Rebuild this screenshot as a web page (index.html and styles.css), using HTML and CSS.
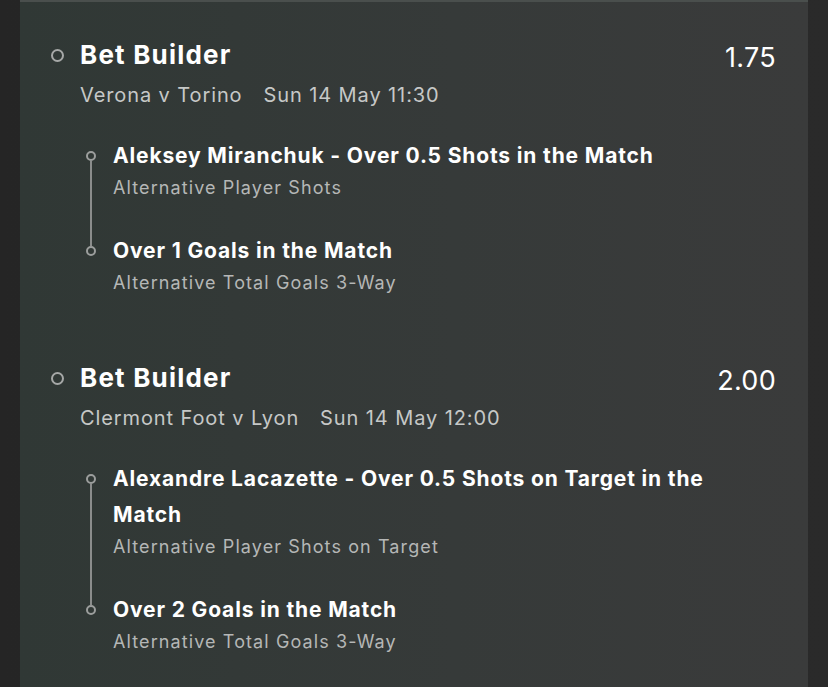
FILE: index.html
```html
<!DOCTYPE html>
<html lang="en">
<head>
  <meta charset="UTF-8" />
  <meta name="viewport" content="width=device-width, initial-scale=1.0"/>
  <title>Bet Slip</title>
  <link rel="stylesheet" href="styles.css">
</head>
<body>

  <div class="slip">

    <!-- Bet 1 -->
    <div class="bet">
      <div class="bet-head">
        <span class="ring"></span>
        <div class="title">Bet Builder</div>
        <div class="odds">1.75</div>
      </div>
      <div class="meta">
        <span>Verona v Torino</span>
        <span>Sun 14 May 11:30</span>
      </div>
      <div class="legs">
        <div class="leg">
          <div class="marker"><span class="dot"></span></div>
          <div class="leg-text">
            <div class="leg-title">Aleksey Miranchuk - Over 0.5 Shots in the Match</div>
            <div class="leg-sub">Alternative Player Shots</div>
          </div>
        </div>
        <div class="leg">
          <div class="marker"><span class="dot"></span></div>
          <div class="leg-text">
            <div class="leg-title">Over 1 Goals in the Match</div>
            <div class="leg-sub">Alternative Total Goals 3-Way</div>
          </div>
        </div>
      </div>
    </div>

    <!-- Bet 2 -->
    <div class="bet">
      <div class="bet-head">
        <span class="ring"></span>
        <div class="title">Bet Builder</div>
        <div class="odds">2.00</div>
      </div>
      <div class="meta">
        <span>Clermont Foot v Lyon</span>
        <span>Sun 14 May 12:00</span>
      </div>
      <div class="legs">
        <div class="leg">
          <div class="marker"><span class="dot"></span></div>
          <div class="leg-text">
            <div class="leg-title">Alexandre Lacazette - Over 0.5 Shots on Target in the Match</div>
            <div class="leg-sub">Alternative Player Shots on Target</div>
          </div>
        </div>
        <div class="leg">
          <div class="marker"><span class="dot"></span></div>
          <div class="leg-text">
            <div class="leg-title">Over 2 Goals in the Match</div>
            <div class="leg-sub">Alternative Total Goals 3-Way</div>
          </div>
        </div>
      </div>
    </div>

  </div>

</body>
</html>
```

FILE: styles.css
```css
* {
  box-sizing: border-box;
}

body {
  margin: 0;
  padding: 0;
  background: linear-gradient(to right, #252525, #2a2a2a);
  font-family: 'Inter', 'Noto Sans', sans-serif;
  color: #fff;
  height: 687px;
  overflow: hidden;
}

.slip {
  margin: 0 20px;
  min-height: 700px;
  background: linear-gradient(to right, #303835, #363a39 55%, #3a3b3b);
  border-top: 2px solid #4a4f4d;
  padding: 36px 32px 0 31px;
}

.bet {
  margin-bottom: 64px;
}

.bet-head {
  display: flex;
  align-items: center;
  height: 34px;
}

.ring {
  width: 13px;
  height: 13px;
  border: 2px solid #a6a8a7;
  border-radius: 50%;
  margin-right: 16px;
  flex-shrink: 0;
}

.title {
  font-size: 26px;
  font-weight: 700;
  line-height: 34px;
  letter-spacing: 1.2px;
  flex: 1;
}

.odds {
  font-size: 27px;
  font-weight: 400;
  line-height: 34px;
  letter-spacing: 0.3px;
  padding-top: 6px;
}

.meta {
  margin: 9px 0 0 29px;
  font-size: 20px;
  line-height: 28px;
  letter-spacing: 0.9px;
  color: #c6c8c7;
  display: flex;
  gap: 21px;
}

.legs {
  margin: 29px 0 0 29px;
}

.leg {
  display: flex;
}

.marker {
  width: 22px;
  margin-right: 11px;
  display: flex;
  flex-direction: column;
  align-items: center;
  flex-shrink: 0;
}

.marker::before,
.marker::after {
  content: "";
  width: 2px;
  background: #8b8d8c;
}

.marker::before {
  height: 13px;
}

.marker::after {
  flex: 1;
}

.leg:first-child .marker::before {
  background: transparent;
}

.leg:last-child .marker::after {
  background: transparent;
}

.dot {
  width: 10px;
  height: 10px;
  border: 2px solid #9c9e9d;
  border-radius: 50%;
  flex-shrink: 0;
}

.leg-text {
  padding-bottom: 31px;
}

.leg:last-child .leg-text {
  padding-bottom: 0;
}

.leg-title {
  font-size: 21px;
  font-weight: 700;
  line-height: 36px;
  letter-spacing: 0.85px;
  max-width: 663px;
}

.leg-sub {
  font-size: 18px;
  line-height: 28px;
  color: #b5b7b6;
  letter-spacing: 1.1px;
}
```
